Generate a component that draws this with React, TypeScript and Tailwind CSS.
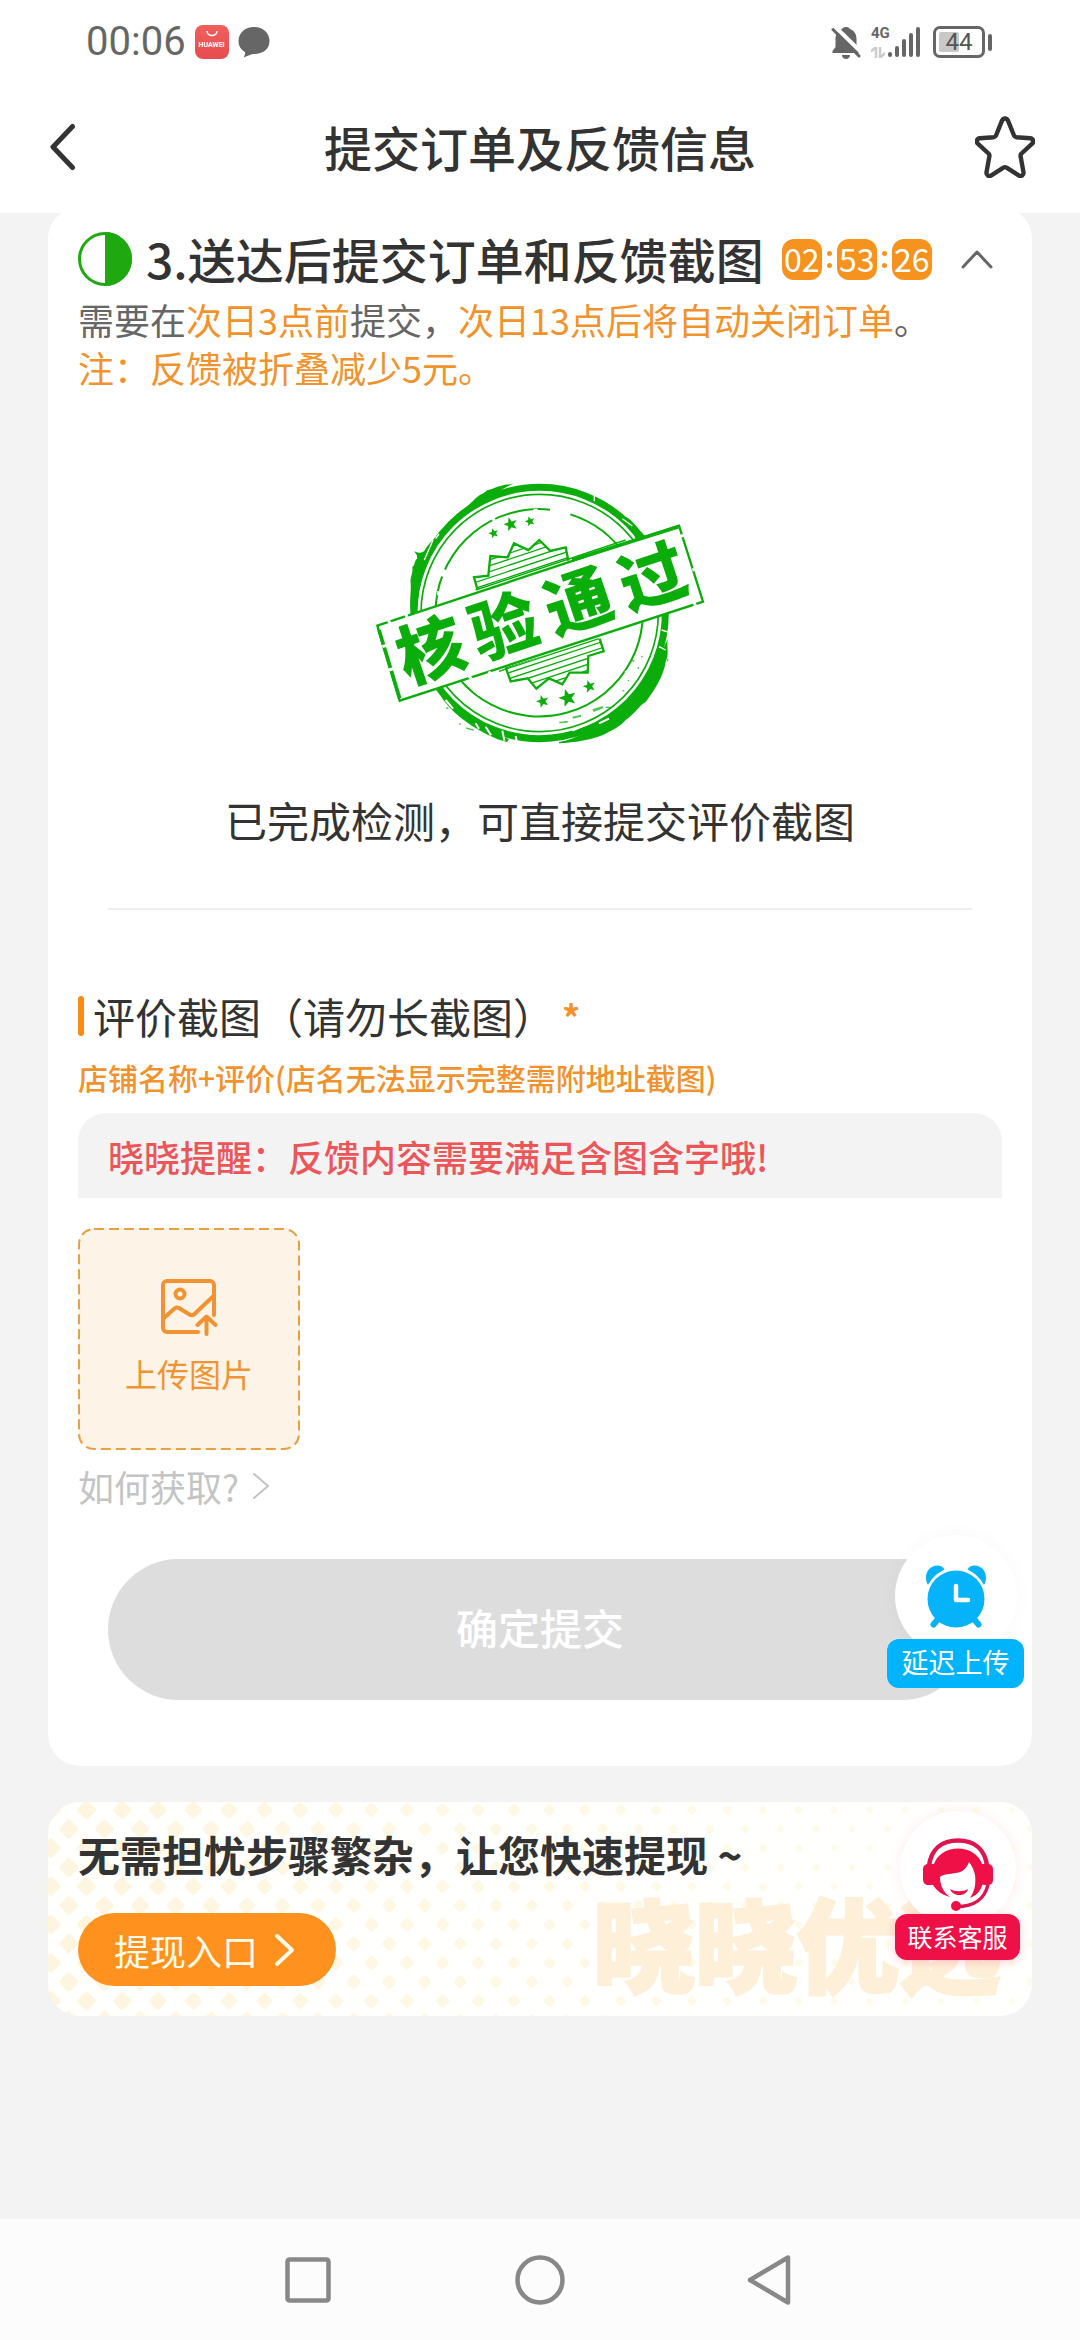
import type { ReactNode } from "react";

const GREEN = "#0bad0b";

/* ---------- status bar ---------- */

function BellOffIcon() {
  return (
    <svg className="h-[34px] w-[30px]" viewBox="0 0 30 34" aria-hidden="true">
      <path d="M15 2a4 4 0 0 1 4 2c5 2 6.500 6 6.500 10v8l3 4v2H1.500v-2l3-4v-8c0-4 1.500-8 6.500-10a4 4 0 0 1 4-2Z" fill="#666" />
      <path d="M11 30h8c0 2.500-2 4-4 4s-4-1.500-4-4Z" fill="#666" />
      <path d="M3 .5 30 27" stroke="#fff" strokeWidth="4" />
      <path d="M2 4.500 28 31" stroke="#666" strokeWidth="3" strokeLinecap="round" />
    </svg>
  );
}

function SignalIcon() {
  return (
    <svg className="h-[32px] w-[32px]" viewBox="0 0 32 32" aria-hidden="true">
      <g stroke="#666" strokeWidth="4" strokeLinecap="round">
        <path d="M2 28v1M9 22v7M16 15v14M23 9v20M30 3v26" />
      </g>
    </svg>
  );
}

function DataArrowsIcon() {
  return (
    <svg className="h-[11px] w-[14px]" viewBox="0 0 14 11" aria-hidden="true">
      <path d="M0 4.500 5 0v11M9 0v11l5-5" fill="none" stroke="#ccc" strokeWidth="2.500" />
    </svg>
  );
}

function StatusBar() {
  return (
    <div className="flex h-[84px] items-center justify-between pr-[88px] pl-[86px]">
      <div className="flex items-center gap-[9px]">
        <span className="font-[Roboto,sans-serif] text-[40px] leading-[40px] text-[#666]">00:06</span>
        <span className="flex h-[34px] w-[34px] flex-col items-center rounded-lg bg-gradient-to-b from-[#f0605d] to-[#e84c50] pt-[6px]">
          <svg className="h-[6px] w-[12px]" viewBox="0 0 12 6" aria-hidden="true">
            <path d="M1 0c0 6 10 6 10 0" fill="none" stroke="#fff" strokeWidth="1.500" />
          </svg>
          <span className="mt-[4px] font-[Roboto,sans-serif] text-[7px] leading-[8px] font-bold text-white">HUAWEI</span>
        </span>
        <svg className="h-[32px] w-[32px]" viewBox="0 0 32 32" aria-hidden="true">
          <path d="M16 1c9 0 15.500 6 15.500 14S25 28 16 28c-3 0-6 2-10.500 3.500 1-1.500 2-3.500 1.500-5.500C3 23.500.5 20 .5 15 .5 7 7 1 16 1Z" fill="#666" />
        </svg>
      </div>
      <div className="flex items-center">
        <BellOffIcon />
        <span className="ml-[10px] flex h-[32px] w-[17px] flex-col justify-between">
          <span className="font-[Roboto,sans-serif] text-[15px] leading-[15px] font-bold text-[#666]">4G</span>
          <DataArrowsIcon />
        </span>
        <SignalIcon />
        <span className="ml-[13px] flex items-center gap-[3px]">
          <span className="relative flex h-[32px] w-[52px] items-center justify-center rounded-[7px] border-[3px] border-[#666]">
            <span className="absolute top-[3px] bottom-[3px] left-[3px] w-[20px] rounded-xs bg-[#c8c8c8]" />
            <span className="relative font-[Roboto,sans-serif] text-[24px] leading-[26px] text-[#555]">44</span>
          </span>
          <span className="h-[17px] w-[4px] rounded-sm bg-[#666]" />
        </span>
      </div>
    </div>
  );
}

/* ---------- icons ---------- */

function Chevron({ className, d, box, width }: { className: string; d: string; box: string; width: number }) {
  return (
    <svg className={className} viewBox={box} fill="none" stroke="currentColor" strokeWidth={width} strokeLinecap="round" strokeLinejoin="round" aria-hidden="true">
      <path d={d} />
    </svg>
  );
}

function StarIcon() {
  return (
    <svg className="h-[62px] w-[60px]" viewBox="0 0 60 62" fill="none" aria-hidden="true">
      <path
        d="M27.200 4.200c1.200-2.300 4.400-2.300 5.600 0l6.200 15.300c.4 1 1.300 1.600 2.300 1.700l13.900 1c2.800.2 4 3.400 2 5.400L46.500 37.500c-.8.7-1.100 1.700-.9 2.700l2.900 16.200c.4 2.600-2.200 4.500-4.500 3.200l-12.400-8c-1-.6-2.200-.6-3.200 0l-12.400 8c-2.300 1.300-4.900-.6-4.500-3.200l2.900-16.200c.2-1-.1-2-.9-2.700L2.800 27.600c-2-2-.8-5.200 2-5.400l13.900-1c1-.1 1.900-.7 2.300-1.700Z"
        stroke="#333"
        strokeWidth="4.400"
        strokeLinejoin="round"
      />
    </svg>
  );
}

function UploadImageIcon() {
  return (
    <svg className="h-[58px] w-[58px]" viewBox="0 0 58 58" fill="none" stroke="#f19333" strokeWidth="4" strokeLinecap="round" strokeLinejoin="round" aria-hidden="true">
      <path d="M54 37V7a4 4 0 0 0-4-4H7a4 4 0 0 0-4 4v43a4 4 0 0 0 4 4h31" />
      <circle cx="20" cy="16" r="4.500" />
      <path d="m4 40 10.500-9.500a4 4 0 0 1 4.500-.5l10.500 6.500a4 4 0 0 0 5-.5L54 17.500" />
      <path d="M46.500 56V39M37.500 47l9-8.500 9 8.500" />
    </svg>
  );
}

function ClockIcon() {
  return (
    <svg className="h-[63px] w-[62px]" viewBox="0 0 62 63" aria-hidden="true">
      <g fill="#06b3f8">
        <path d="M3 20C-2 11 3 1 12 .5c3.500 0 6 1.500 7.500 4C12 8 7 13 3 20ZM59 20C64 11 59 1 50 .5c-3.500 0-6 1.500-7.500 4C50 8 55 13 59 20Z" />
        <circle cx="31" cy="34" r="28.500" />
      </g>
      <path d="m13 54-4.500 5.500M49 54l4.500 5.500" stroke="#06b3f8" strokeWidth="6" strokeLinecap="round" />
      <path d="M31 21v14h12" fill="none" stroke="#fff" strokeWidth="4.500" strokeLinecap="round" strokeLinejoin="round" />
    </svg>
  );
}

function AgentIcon() {
  return (
    <svg className="h-[75px] w-[70px]" viewBox="0 0 70 75" aria-hidden="true">
      <path d="M6 28C8 11 19 2.500 35 2.500S62 11 64 28" fill="none" stroke="#dc1450" strokeWidth="4.500" />
      <g fill="#f01048">
        <path d="M11 26C14 17 23 10.500 35 10.500S56 17 59 26h5c4 0 6 2 6 5v11c0 3-2 5-6 5h-3C59 53 54 57 47 60c5-7 6-15 5-23-1-5-3-9-6-13-3 7-6 10-13 11-6 1-13 1-16 4 0 8 3 15 10 20-8-2-14-7-17-12H6c-4 0-6-2-6-6V31c0-3 2-5 6-5Z" />
        <path d="M27 51c5 3 13 3 18 0-2 8-15 8-18 0Z" />
        <circle cx="33" cy="68" r="5" />
      </g>
      <path d="M50 61c5-3 9-8 11-14" fill="none" stroke="#fff" strokeWidth="3" />
      <path d="M34 68.500c17 0 28-8 31-22" fill="none" stroke="#dc1450" strokeWidth="3.500" />
    </svg>
  );
}

/* ---------- approval stamp ---------- */

const BURST_TOP = "355,387 345,352 388,347 394,288 446,292 465,250 508,270 541,240 574,273 620,262 628,302";
const BURST_BOTTOM = "440,622 455,664 506,655 532,686 570,655 610,673 632,638 686,638 688,588 734,574 722,536";
const HATCH = Array.from({ length: 32 }, (_, i) => -250 + i * 17);

const star = (cx: number, cy: number, r: number) =>
  Array.from({ length: 10 }, (_, i) => {
    const a = -Math.PI / 2 - 0.3 + (i * Math.PI) / 5;
    const q = i % 2 ? r * 0.42 : r;
    return `${(cx + q * Math.cos(a)).toFixed(1)},${(cy + q * Math.sin(a)).toFixed(1)}`;
  }).join(" ");

const STARS: [number, number, number][] = [
  [404, 220, 16],
  [455, 193, 22],
  [513, 184, 16],
  [551, 724, 20],
  [626, 714, 28],
  [691, 679, 20],
];

function Stamp() {
  return (
    <svg className="mx-auto h-[268px] w-[334px]" viewBox="42 54 1002 804" role="img" aria-label="核验通过">
      <defs>
        <clipPath id="burst-top">
          <polygon points={BURST_TOP} />
        </clipPath>
        <clipPath id="burst-bottom">
          <polygon points={BURST_BOTTOM} />
        </clipPath>
      </defs>
      <g fill="none" stroke={GREEN}>
        <circle cx="542" cy="459" r="377" strokeWidth="21" />
        <circle cx="542" cy="459" r="356" strokeWidth="5" />
        <path d="M573 149A311 311 0 1 0 850 490A311 311 0 0 0 634 163" strokeWidth="6" />
      </g>
      <g fill={GREEN}>
        <path d="M157 470c-8-40 0-70-2-100-3-20 8-28 5-50 8-2 6-20 14-24 2-12-4-14-8-22 10 6 22 6 30-2 10-16 24-34 36-38l-14 40c-28 50-42 120-45 196Z" />
        <path d="M250 215c30-40 60-60 100-100 12-12 26-14 34-24 18-4 30-12 44-14 14-6 26-2 36-7l-50 26C350 124 300 160 258 216Z" />
        <path d="M600 846c60-10 90-40 130-60 50-20 90-60 130-110 20-36 40-80 66-140-4 30 6 40-6 70-6 40-30 80-60 120-20 10-30 34-60 54-16 20-40 30-70 46-40 14-80 22-130 24Z" />
        <path d="M800 170c20 10 40 40 62 62l-30 12c-8-30-24-50-32-74ZM250 690c20 50 80 90 140 120l60 28-6 8c-70-16-180-90-204-150Z" />
      </g>
      <g fill="none" stroke="#fff" strokeWidth="4">
        <path d="M706 104v20M790 176l30 22M196 300l26-60M230 236l10-14" />
        <path d="M600 800l60-18M640 812l70-30M720 790l30-14M260 720l22 26M380 800l16 26M430 812l6 30M470 828l4 20M350 790l10 16" strokeWidth="6" />
        <path d="M820 640l34-34M840 590l18-40M900 560l20 10M908 510l24 8" />
        <path d="M530 146v8M400 182l8-6M250 350l10-20M234 400h10M350 692l14 12M800 640l16-12" strokeWidth="12" />
      </g>
      <g fill={GREEN} opacity="0.7">
        <path d="M820 600h6v5h-6ZM836 622h4v5h-4ZM846 588h5v4h-5ZM806 660h4v4h-4ZM790 690h6v4h-6ZM700 748l30-10 4 6-30 12ZM640 770l26-6v6l-24 6ZM600 786l26-4v6l-24 2ZM740 740h14v4h-14ZM300 790h5v4h-5ZM320 802l24 6v4l-22-5ZM262 742h6v5h-6ZM180 280h5v8h-5ZM924 596h4v8h-4Z" />
      </g>
      <polygon points="55,497 960,197 1032,425 122,722" fill="#fff" />
      {[
        ["burst-top", BURST_TOP],
        ["burst-bottom", BURST_BOTTOM],
      ].map(([id, points]) => (
        <g key={id} stroke={GREEN}>
          <g clipPath={`url(#${id})`} strokeWidth="4">
            {HATCH.map((y) => (
              <path key={y} d={`M-300 ${y}H300`} transform="translate(542 459) rotate(-18.4)" />
            ))}
          </g>
          <polyline points={points} fill="none" strokeWidth="7" />
        </g>
      ))}
      <g fill={GREEN}>
        {STARS.map(([x, y, r]) => (
          <polygon key={x} points={star(x, y, r)} />
        ))}
      </g>
      <polygon points="55,497 960,197 1032,425 122,722" fill="#fff" stroke={GREEN} strokeWidth="7" />
      <g stroke={GREEN} fill="none">
        <path d="M640 300 958 200M60 510l62 205" strokeWidth="11" />
        <path d="M350 390 800 240M420 634 720 536" strokeWidth="4" />
      </g>
      <g stroke="#fff" strokeWidth="9">
        <path d="M88 480l8 16M140 462l6 14M330 648l16 20M390 634l8 16M70 560l26-8M90 630l24-8M962 230l24-8M1000 330l22-6M1010 440l-6-18" />
      </g>
      <text
        x="-344 -114 122 356"
        y="75"
        transform="translate(542 461) rotate(-18.4)"
        textAnchor="middle"
        fill={GREEN}
        className="font-['Noto_Sans_CJK_SC',sans-serif] text-[200px] font-black"
      >
        核验通过
      </text>
    </svg>
  );
}

/* ---------- pieces ---------- */

function Countdown({ parts }: { parts: string[] }) {
  return (
    <div className="flex items-center text-[32px] leading-[38px]">
      {parts.map((part, i) => (
        <div key={i} className="flex items-center">
          {i > 0 && (
            <span className="flex w-[15px] flex-col items-center gap-[7px]">
              <span className="h-[5px] w-[5px] rounded-full bg-[#f6921e]" />
              <span className="h-[5px] w-[5px] rounded-full bg-[#f6921e]" />
            </span>
          )}
          <span className="flex h-[41px] w-[40px] items-center justify-center rounded-xl bg-[#f6921e] pb-[3px] text-white">{part}</span>
        </div>
      ))}
    </div>
  );
}

function FloatingAction({ className, icon, circle, label, text }: { className: string; icon: ReactNode; circle: string; label: string; text: string }) {
  return (
    <button type="button" className={`absolute flex flex-col items-center ${className}`}>
      <span className={`flex items-center justify-center rounded-full bg-white ${circle}`}>{icon}</span>
      <span className={`relative flex items-center justify-center rounded-xl pb-[3px] text-white ${label}`}>{text}</span>
    </button>
  );
}

function DiamondPattern() {
  const diamonds: ReactNode[] = [];
  for (let row = 0; row < 12; row++) {
    for (let col = -1; col < 28; col++) {
      const x = 3 + col * 35.6 + (row % 2 ? 17.8 : 0);
      const y = 8 + row * 19.1;
      const s = 15 - 9 * Math.min(1, Math.max(0, x / 800));
      diamonds.push(
        <rect key={`${row}-${col}`} x={x - s / 2} y={y - s / 2} width={s} height={s} rx="2" transform={`rotate(45 ${x} ${y})`} />,
      );
    }
  }
  return (
    <svg className="absolute inset-0 h-full w-full" aria-hidden="true">
      <defs>
        <linearGradient id="diamond-fade" gradientUnits="userSpaceOnUse" x1="0" y1="0" x2="984" y2="0">
          <stop offset="0" stopColor="#fef5e0" />
          <stop offset="1" stopColor="#fdfcea" />
        </linearGradient>
        <mask id="diamond-mask">
          <g fill="#fff">{diamonds}</g>
        </mask>
      </defs>
      <rect width="100%" height="100%" fill="url(#diamond-fade)" mask="url(#diamond-mask)" />
    </svg>
  );
}

/* ---------- page ---------- */

export default function App() {
  return (
    <div className="flex min-h-screen flex-col bg-[#f3f3f3] font-['Noto_Sans_CJK_SC',sans-serif] text-[#333]">
      <header className="relative z-10 bg-white">
        <StatusBar />
        <div className="flex h-[129px] items-center justify-between px-[45px] pb-[4px]">
          <button type="button" aria-label="返回" className="flex w-[60px] pl-[4px]">
            <Chevron className="h-[48px] w-[28px]" box="0 0 28 48" d="M23.500 3.500 4 24l19.500 20.500" width={5} />
          </button>
          <h1 className="pb-[2px] text-[48px] leading-[60px] font-medium">提交订单及反馈信息</h1>
          <button type="button" aria-label="收藏">
            <StarIcon />
          </button>
        </div>
      </header>

      <main className="flex-1 px-12">
        <section className="relative -mt-1.5 rounded-[32px] bg-white px-[30px] pt-[16px] pb-[66px]">
          <div className="flex h-[72px] items-center">
            <svg className="h-[54px] w-[54px] shrink-0" viewBox="0 0 54 54" aria-hidden="true">
              <circle cx="27" cy="27" r="25.500" fill="none" stroke="#1fa810" strokeWidth="3" />
              <path d="M27 0a27 27 0 0 1 0 54Z" fill="#1fa810" />
            </svg>
            <h2 className="ml-[14px] pb-[2px] text-[48px] leading-[60px] font-medium whitespace-nowrap">3.送达后提交订单和反馈截图</h2>
            <div className="ml-[18px]">
              <Countdown parts={["02", "53", "26"]} />
            </div>
            <button type="button" aria-label="收起" className="mr-[9px] ml-auto text-[#666]">
              <Chevron className="h-[20px] w-[32px]" box="0 0 32 20" d="m2 18 14-15 14 15" width={3} />
            </button>
          </div>
          <p className="text-[36px] leading-[48px] text-[#666]">
            需要在<span className="text-[#f2922c]">次日3点前</span>提交，<span className="text-[#f2922c]">次日13点后将自动关闭订单</span>。
          </p>
          <p className="text-[36px] leading-[48px] text-[#f2922c]">注：反馈被折叠减少5元。</p>

          <div className="mt-[87px]">
            <Stamp />
          </div>
          <p className="mt-[44px] text-center text-[42px] leading-[60px]">已完成检测，可直接提交评价截图</p>
          <hr className="mx-[30px] mt-[58px] border-t-2 border-[#eee]" />

          <div className="mt-[76px] flex items-center">
            <span className="h-[40px] w-[6px] rounded-full bg-[#fa8c16]" />
            <h3 className="ml-[9px] text-[42px] leading-[60px]">评价截图（请勿长截图）</h3>
            <span className="ml-[7px] text-[36px] leading-[60px] font-bold text-[#f2922c]">*</span>
          </div>
          <p className="mt-[9px] text-[30px] leading-[44px] font-medium text-[#f2922c]">店铺名称+评价(店名无法显示完整需附地址截图)</p>
          <p className="mt-[14px] flex h-[85px] items-center rounded-t-[28px] bg-[#f3f3f3] px-[30px] text-[36px] leading-[48px] font-medium text-[#ec5659]">
            晓晓提醒：反馈内容需要满足含图含字哦!
          </p>

          <button type="button" className="relative mt-[30px] flex h-[222px] w-[222px] flex-col items-center rounded-2xl bg-[#fdf4e7] pt-[50px] text-[#f19333]">
            <svg className="absolute inset-0 h-full w-full" viewBox="0 0 222 222" aria-hidden="true">
              <rect x="1" y="1" width="220" height="220" rx="15" fill="none" stroke="#e9a040" strokeWidth="2" strokeDasharray="10 5" />
            </svg>
            <UploadImageIcon />
            <span className="mt-[13px] text-[32px] leading-[48px]">上传图片</span>
          </button>
          <a href="#help" className="mt-[12px] flex items-center gap-[14px] text-[36px] leading-[48px] text-[#c4c4c4]">
            如何获取?
            <Chevron className="h-[26px] w-[17px]" box="0 0 17 26" d="m1 1 14 12L1 25" width={2} />
          </a>

          <div className="mt-[49px] px-[30px]">
            <button type="submit" className="h-[141px] w-full rounded-full bg-[#ddd] pb-[5px] text-[42px] leading-[60px] font-medium text-white">
              确定提交
            </button>
          </div>
          <FloatingAction
            className="right-[8px] bottom-[78px]"
            circle="h-[122px] w-[122px] shadow-[0_0_20px_rgba(0,0,0,0.03)]"
            icon={<ClockIcon />}
            label="-mt-[18px] h-[49px] w-[137px] bg-[#00b4fb] text-[27px] leading-[40px]"
            text="延迟上传"
          />
        </section>

        <section className="relative mt-9 overflow-hidden rounded-[32px] bg-[#fffffd] px-[30px] pt-[24px] pb-[30px]">
          <DiamondPattern />
          <span className="absolute right-[31px] bottom-[15px] text-[102px] leading-[120px] font-black text-[#fdefd8] [-webkit-text-stroke:3px_#fdefd8]" aria-hidden="true">
            晓晓优选
          </span>
          <p className="relative text-[42px] leading-[56px] font-bold">无需担忧步骤繁杂，让您快速提现 ~</p>
          <button type="button" className="relative mt-[31px] flex h-[73px] w-[258px] items-center gap-[16px] rounded-full bg-[#ff921f] pl-[36px] text-[36px] leading-[48px] text-[#fffbe8]">
            提现入口
            <Chevron className="h-[34px] w-[22px]" box="0 0 22 34" d="m3 3 15 14L3 31" width={4} />
          </button>
          <FloatingAction
            className="right-[12px] bottom-[56px]"
            circle="h-[116px] w-[116px] pt-3 shadow-[0_0_14px_rgba(240,16,72,0.08)]"
            icon={<AgentIcon />}
            label="-mt-[13px] h-[46px] w-[125px] bg-[#f01048] text-[25px] leading-[40px] shadow-[0_2px_10px_rgba(240,16,72,0.2)]"
            text="联系客服"
          />
        </section>
      </main>

      <nav className="flex h-[121px] items-center justify-center gap-[182px] bg-[#fcfcfc]">
        <button type="button" aria-label="最近任务">
          <svg className="h-[50px] w-[50px]" viewBox="0 0 50 50" fill="none" stroke="#888" strokeWidth="4.500" aria-hidden="true">
            <rect x="4.500" y="4.500" width="41" height="41" rx="2" />
          </svg>
        </button>
        <button type="button" aria-label="主屏幕">
          <svg className="h-[50px] w-[50px]" viewBox="0 0 50 50" fill="none" stroke="#888" strokeWidth="4.500" aria-hidden="true">
            <circle cx="25" cy="25" r="22.500" />
          </svg>
        </button>
        <button type="button" aria-label="返回上一页">
          <svg className="h-[50px] w-[50px]" viewBox="0 0 50 50" fill="none" stroke="#888" strokeWidth="4.500" strokeLinejoin="round" aria-hidden="true">
            <path d="M41 2.500v45L3 25Z" />
          </svg>
        </button>
      </nav>
    </div>
  );
}
